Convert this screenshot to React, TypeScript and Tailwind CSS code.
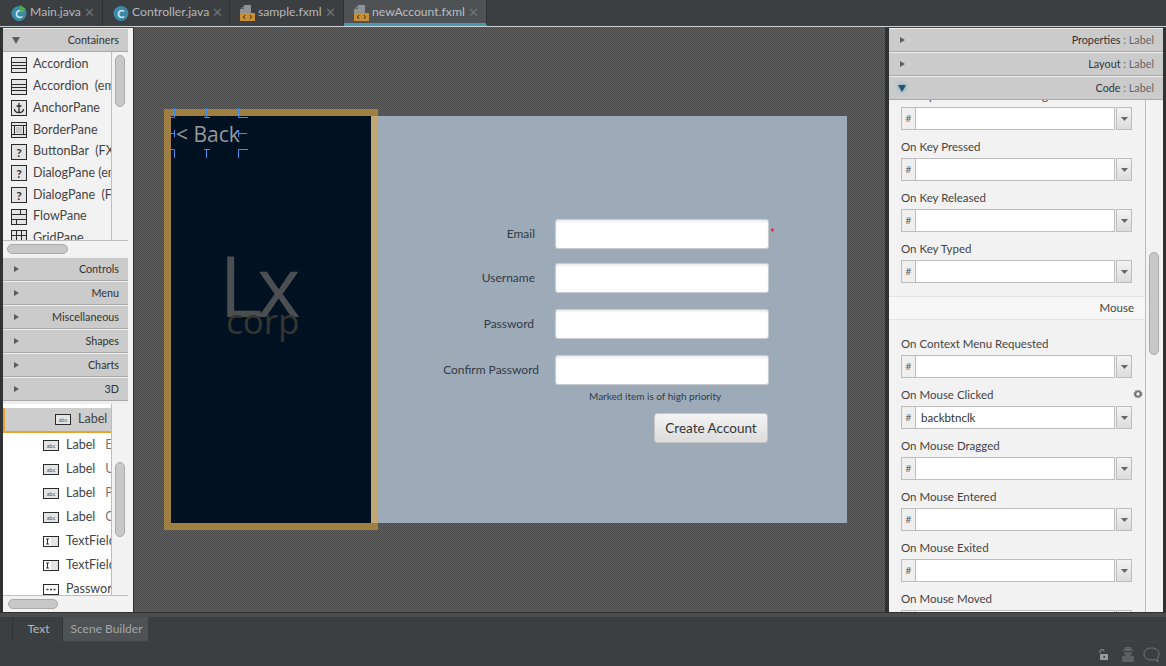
import React from "react";

const font = { fontFamily: 'Lato, "Noto Sans", sans-serif' };
const canvasFont = { fontFamily: '"Open Sans", sans-serif' };

type IconKind = "acc" | "anchor" | "border" | "q" | "flow" | "grid" | "abc" | "field" | "pass";

const PaletteIcon = ({ kind }: { kind: IconKind }) => {
  const frame = "#2a2a2a";
  return (
    <svg width="16" height="16" viewBox="0 0 16 16" className="shrink-0">
      <rect x="0.5" y="0.5" width="15" height="15" fill="#e4e4e4" stroke={frame} />
      {kind === "acc" && (
        <path d="M1 5.5h14M1 8.5h14M1 11.5h14" stroke={frame} fill="none" />
      )}
      {kind === "anchor" && (
        <path d="M8 3v9M5.5 6h5M3.5 9c0 3 3 3.500 4.500 3.500S12.500 12 12.500 9" stroke={frame} strokeWidth="1.300" fill="none" />
      )}
      {kind === "border" && (
        <>
          <path d="M1 3.500h14M1 12.500h14M3.500 3.500v9M12.500 3.500v9" stroke={frame} fill="none" />
          <rect x="5" y="5" width="6" height="6" fill="#c8c8c8" />
        </>
      )}
      {kind === "q" && (
        <text x="8" y="12.500" textAnchor="middle" fontSize="12" fontWeight="700" fill="#333" style={font}>?</text>
      )}
      {kind === "flow" && (
        <path d="M1 5.500h14M1 10.500h14M9.500 1v4.500M5.500 10.500V15" stroke={frame} fill="none" />
      )}
      {kind === "grid" && (
        <path d="M1 5.500h14M1 10.500h14M5.500 1v14M10.500 1v14" stroke={frame} fill="none" />
      )}
    </svg>
  );
};

const WideIcon = ({ kind }: { kind: IconKind }) => (
  <svg width="16" height="11" viewBox="0 0 16 11" className="shrink-0">
    <rect x="0.500" y="0.500" width="15" height="10" fill={kind === "pass" ? "#fff" : "#e4e4e4"} stroke="#2a2a2a" />
    {kind === "abc" && (
      <text x="8" y="7.500" textAnchor="middle" fontSize="6" fill="#555" style={font}>abc</text>
    )}
    {kind === "field" && <rect x="1" y="1" width="7" height="9" fill="#fff" />}
    {kind === "field" && <path d="M3 3h3M3 8h3M4.500 3v5" stroke="#333" fill="none" />}
    {kind === "pass" && <path d="M3.500 5.500h2M7 5.500h2M10.500 5.500h2" stroke="#333" strokeWidth="1.500" fill="none" />}
  </svg>
);

const FileIcon = ({ type }: { type: "run" | "class" | "fxml" }) => {
  if (type === "fxml") {
    return (
      <svg width="15" height="16" viewBox="0 0 15 16" className="shrink-0">
        <path d="M4 0h7v8H0V4h4z" fill="#8d9296" />
        <path d="M1 3.500h2.500V1z" fill="#8d9296" />
        <rect x="0" y="8" width="15" height="8" fill="#c98f35" />
        <path d="M5.200 10 3.400 12l1.800 2M9.800 10l1.800 2-1.800 2" stroke="#3a2a10" fill="none" />
      </svg>
    );
  }
  return (
    <svg width="16" height="16" viewBox="0 0 16 16" className="shrink-0">
      <circle cx="8" cy="8.500" r="7.500" fill="#3d8aa8" />
      <text x="8" y="12.500" textAnchor="middle" fontSize="11" fontWeight="700" fill="#dce8ee" style={font}>C</text>
      {type === "run" && <path d="M9 0l6 4-6 4z" fill="#4fae4f" />}
    </svg>
  );
};

const tabs = [
  { name: "Main.java", type: "run" as const, w: "w-[102px]" },
  { name: "Controller.java", type: "class" as const, w: "w-[127px]" },
  { name: "sample.fxml", type: "fxml" as const, w: "w-[114px]" },
  { name: "newAccount.fxml", type: "fxml" as const, w: "w-[143px]", active: true },
];

const TabBar = () => (
  <div className="flex h-[26px] bg-[#3c3f41] pl-[1px]">
    {tabs.map((t) => (
      <div
        key={t.name}
        className={`${t.w} flex items-center gap-[3px] border-r border-[#2f3133] pl-[10px] text-[12.200px] ${
          t.active ? "border-b-[3px] border-b-[#4a97b0] bg-[#4e5254] pt-[2px] text-[#b9bdc0]" : "pb-[1px] text-[#b4b8bb]"
        }`}
      >
        <FileIcon type={t.type} />
        <span className="whitespace-nowrap">{t.name}</span>
        <span className="ml-auto mr-[10px] text-[13px] leading-none text-[#6f7376]">✕</span>
      </div>
    ))}
  </div>
);

const Arrow = ({ open, glow }: { open?: boolean; glow?: boolean }) => (
  <svg width="9" height="9" viewBox="0 0 9 9" className={`shrink-0 ${glow ? "drop-shadow-[0_0_2px_#3fa0d0]" : ""}`}>
    <path d={open ? "M0 1h8L4 8z" : "M2 1l5 3-5 3z"} fill={glow ? "#2c5168" : "#5c5c5c"} />
  </svg>
);

const Pane = ({ title, open, glow, sub }: { title: string; open?: boolean; glow?: boolean; sub?: string }) => (
  <div className="flex h-[24px] shrink-0 items-center justify-between border-t border-[#eee] border-b border-b-[#a8a8a8] bg-[#cbcbcb] pl-[9px] pr-[9px] text-[10.800px] text-[#333]">
    <Arrow open={open} glow={glow} />
    <span>
      {title}
      {sub && <span className="text-[#666]"> : {sub}</span>}
    </span>
  </div>
);

const Scrollbar = ({ pad, h, w = "w-[17px]" }: { pad: string; h: string; w?: string }) => (
  <div className={`${w} shrink-0 border-l border-[#bdbdbd] bg-[#f2f2f2] pl-[3px] ${pad}`}>
    <div className={`${h} w-[10px] rounded-[5px] border border-[#aaa] bg-[#c8c8c8]`} />
  </div>
);

const containers: [string, IconKind][] = [
  ["Accordion", "acc"],
  ["Accordion  (empty)", "acc"],
  ["AnchorPane", "anchor"],
  ["BorderPane", "border"],
  ["ButtonBar  (FX8)", "q"],
  ["DialogPane (empty)", "q"],
  ["DialogPane  (FX8)", "q"],
  ["FlowPane", "flow"],
  ["GridPane", "grid"],
];

const tree: [string, string, IconKind][] = [
  ["Label", "Email", "abc"],
  ["Label", "Username", "abc"],
  ["Label", "Password", "abc"],
  ["Label", "Confirm", "abc"],
  ["TextField", "", "field"],
  ["TextField", "", "field"],
  ["PasswordField", "", "pass"],
];

const LeftPanel = () => (
  <div className="mt-[1px] flex w-[134px] shrink-0 flex-col border-l-[3px] border-r-[1px] border-l-[#2f3133] border-r-[#2f3133] bg-[#f2f2f2] pr-[5px]">
    <Pane title="Containers" open />
    <div className="flex h-[189px] shrink-0 overflow-hidden border-b border-[#bdbdbd]">
      <div className="min-w-0 flex-1 overflow-hidden pt-[2px]">
        {containers.map(([name, kind]) => (
          <div key={name + kind} className="flex h-[21.700px] items-center gap-[6px] pl-[8px] text-[12.500px] whitespace-pre text-[#444]">
            <PaletteIcon kind={kind} />
            {name}
          </div>
        ))}
      </div>
      <Scrollbar pad="pt-[3px]" h="h-[52px]" />
    </div>
    <div className="flex h-[16px] shrink-0 items-center pl-[4px]">
      <div className="h-[10px] w-[61px] rounded-[5px] border border-[#aaa] bg-[#c8c8c8]" />
    </div>
    <Pane title="Controls" />
    <Pane title="Menu" />
    <Pane title="Miscellaneous" />
    <Pane title="Shapes" />
    <Pane title="Charts" />
    <Pane title="3D" />
    <div className="flex min-h-0 flex-1 flex-col overflow-hidden border-t-[3px] border-[#eee] bg-white">
      <div className="flex min-h-0 flex-1">
        <div className="min-w-0 flex-1 overflow-hidden pt-[4px]">
          <div className="flex h-[25px] items-center gap-[7px] border-b-[2px] border-l-[2px] border-[#e8a32c] bg-[#cdcdcd] pl-[50px] text-[12.500px] text-[#444]">
            <WideIcon kind="abc" />
            Label
          </div>
          {tree.map(([a, b, kind], i) => (
            <div key={i} className="flex h-[24px] items-center gap-[7px] pl-[40px] text-[12.500px] whitespace-nowrap text-[#444]">
              <WideIcon kind={kind} />
              {a}
              <span className="ml-[3px] text-[#777]">{b}</span>
            </div>
          ))}
        </div>
        <Scrollbar pad="pt-[58px]" h="h-[75px]" />
      </div>
      <div className="flex h-[17px] shrink-0 items-center border-t border-[#bdbdbd] bg-[#f2f2f2] pl-[5px]">
        <div className="h-[10px] w-[50px] rounded-[5px] border border-[#aaa] bg-[#c8c8c8]" />
      </div>
    </div>
  </div>
);

const rows = ["Email", "Username", "Password", "Confirm Password"];

const TextInput = () => (
  <div className="h-[30px] w-[214px] rounded-[3px] border border-[#c8ccd0] bg-white shadow-[inset_0_2px_2px_#eee]" />
);

const Handles = () => (
  <svg width="90" height="56" viewBox="0 0 90 56" className="absolute left-[26px] top-[79px]">
    <path
      d="M5 11.500h9.500V2M44 11.500h6M46.500 2v9.500M78.500 2v9.500H88M6 27.500h8M14.500 24v7M78.500 24v7M78.500 27.500H87M5 43.500h9.500V52M44 43.500h6M46.500 43.500V52M88 43.500h-9.500V52"
      stroke="#3f8fe8"
      fill="none"
    />
  </svg>
);

const Canvas = () => (
  <div className="relative min-w-0 flex-1 bg-[#555] bg-[repeating-conic-gradient(#4b4b4b_0_25%,#5f5f5f_0_50%)] bg-[length:2px_2px] pl-[37px] pt-[89px]">
    <div className="flex h-[407px] w-[676px] bg-[#9dabb9]">
      <div className="flex w-[200px] shrink-0 flex-col bg-[#001122]">
        <div className="pl-[5px] pt-[3px] text-[21px] leading-[30px] text-[#999]" style={canvasFont}>
          {"< Back"}
        </div>
        <div className="mt-[94px] pl-[48px] text-[84px] leading-[84px] tracking-[-6px] text-[#4c4f52]" style={canvasFont}>
          Lx
        </div>
        <div className="-mt-[26px] pl-[55px] text-[35px] leading-[40px] text-[#37352f]" style={canvasFont}>
          corp
        </div>
      </div>
      <div className="flex flex-1 flex-col pt-[103px] text-[12px] text-[#333a44]">
        {rows.map((r, i) => (
          <div key={r} className={`flex items-center ${i === 0 ? "" : i === 1 ? "mt-[14px]" : "mt-[16px]"}`}>
            <div className={`w-[168px] shrink-0 text-right whitespace-nowrap ${i === 3 ? "pr-[0px]" : i === 2 ? "pr-[5px]" : "pr-[4px]"}`}>
              {r}
            </div>
            <div className="ml-[16px]"><TextInput /></div>
            {i === 0 && <span className="-mt-[2px] ml-[1px] text-[12px] font-bold text-[#e0203a]">*</span>}
          </div>
        ))}
        <div className="mt-[4px] pl-[218px] text-[10px] leading-[15px] whitespace-nowrap text-[#333a44]">
          Marked item is of high priority
        </div>
        <div className="mt-[9px] pl-[283px]">
          <div className="flex h-[30px] w-[114px] items-center justify-center rounded-[3px] border border-[#c4c4c4] bg-gradient-to-b from-[#f4f4f4] to-[#dcdcdc] text-[13.500px] text-[#333]">
            Create Account
          </div>
        </div>
      </div>
    </div>
    <div className="absolute left-[30px] top-[82px] h-[421px] w-[214px] border-[7px] border-[rgba(226,164,51,0.53)]" />
    <Handles />
  </div>
);

const EventField = ({ value }: { value?: string }) => (
  <div className="flex h-[23px] items-stretch">
    <div className="flex w-[15px] items-center justify-center border border-[#bdbdbd] bg-[#efefef] text-[10px] text-[#666]">#</div>
    <div className="flex w-[199px] items-center border-y border-r border-[#bdbdbd] bg-white pl-[5px] text-[11.500px] text-[#333]">{value}</div>
    <div className="ml-[1px] flex w-[16px] items-center justify-center border border-[#bdbdbd] bg-gradient-to-b from-[#f3f3f3] to-[#dcdcdc]">
      <svg width="7" height="4" viewBox="0 0 7 4"><path d="M0 0h7L3.500 4z" fill="#666" /></svg>
    </div>
  </div>
);

const EventRow = ({ label, value }: { label: string; value?: string }) => (
  <div className="relative h-[51px] pl-[12px]">
    <div className="flex h-[28px] items-end pb-[3px] text-[11.500px] whitespace-nowrap text-[#444]">{label}</div>
    <EventField value={value} />
    {value && (
      <svg width="10" height="10" viewBox="0 0 24 24" className="absolute right-[2px] top-[11px]">
        <path d="M12 1l2 3 4-1 1 4 4 2-2 3 2 3-4 2-1 4-4-1-2 3-2-3-4 1-1-4-4-2 2-3-2-3 4-2 1-4 4 1zM12 8a4 4 0 1 0 0 8 4 4 0 0 0 0-8z" fill="#777" fillRule="evenodd" />
      </svg>
    )}
  </div>
);

const RightPanel = () => (
  <div className="mt-[1px] flex w-[281px] shrink-0 flex-col border-l-[4px] border-r-[3px] border-l-[#2f3133] border-r-[#2f3133] bg-[#f2f2f2]">
    <Pane title="Properties" sub="Label" />
    <Pane title="Layout" sub="Label" />
    <Pane title="Code" sub="Label" open glow />
    <div className="flex min-h-0 flex-1 overflow-hidden">
      <div className="min-w-0 flex-1 overflow-hidden">
        <div className="-mt-[21px]">
          <EventRow label="On Input Method Text Changed" />
        </div>
        <EventRow label="On Key Pressed" />
        <EventRow label="On Key Released" />
        <EventRow label="On Key Typed" />
        <div className="mt-[13px] flex h-[24px] items-center justify-end border-y border-[#e2e2e2] bg-[#f7f7f7] pr-[11px] text-[11.500px] text-[#444]">Mouse</div>
        <div className="h-[7px]" />
        <EventRow label="On Context Menu Requested" />
        <EventRow label="On Mouse Clicked" value="backbtnclk" />
        <EventRow label="On Mouse Dragged" />
        <EventRow label="On Mouse Entered" />
        <EventRow label="On Mouse Exited" />
        <EventRow label="On Mouse Moved" />
      </div>
      <Scrollbar pad="pt-[152px]" h="h-[103px]" w="w-[18px]" />
    </div>
  </div>
);

const BottomBar = () => (
  <div className="flex h-[54px] shrink-0 flex-col bg-[#3c3f41]">
    <div className="h-[5px] border-t border-[#2f3133] bg-[#4a4d4f]" />
    <div className="flex h-[25px] border-b border-[#46403e] pl-[12px] text-[12px]">
      <div className="flex w-[51px] items-center justify-center border-x border-[#333] pl-[2px] text-[#b4b8bb]">Text</div>
      <div className="flex w-[85px] items-center justify-center bg-[#4e5254] pl-[2px] text-[#a3a7aa]">Scene Builder</div>
    </div>
    <div className="flex flex-1 items-center justify-end pr-[6px] pt-[1px]">
      <svg width="10" height="11" viewBox="0 0 10 11">
        <path d="M1 4V2.500a2 2 0 0 1 4 0" stroke="#999" fill="none" />
        <rect x="1" y="5" width="8" height="6" fill="#999" />
        <rect x="4.500" y="7" width="1.500" height="2" fill="#3c3f41" />
      </svg>
      <svg width="14" height="15" viewBox="0 0 14 15" className="ml-[12px]">
        <path d="M3 3 4 0h6l1 3h2v1H1V3zM3 5h8c0 2-1 3-1.500 4H13v6H1V9h3.500C4 8 3 7 3 5z" fill="#5d6062" />
      </svg>
      <svg width="17" height="16" viewBox="0 0 17 16" className="ml-[8px]">
        <path d="M8.500 1C4 1 1 3.500 1 7s3 6 7.500 6c1.500 0 2.500-.2 3.500-.6L15 15l-.6-3.700C15.400 10.200 16 8.700 16 7c0-3.500-3-6-7.500-6z" stroke="#777" fill="none" />
      </svg>
    </div>
  </div>
);

export default function App() {
  return (
    <div className="flex h-[666px] w-[1166px] flex-col overflow-hidden bg-[#3c3f41]" style={font}>
      <TabBar />
      <div className="flex min-h-0 flex-1 border-t-[1px] border-[#cfd2d4]">
        <LeftPanel />
        <Canvas />
        <RightPanel />
      </div>
      <BottomBar />
    </div>
  );
}
